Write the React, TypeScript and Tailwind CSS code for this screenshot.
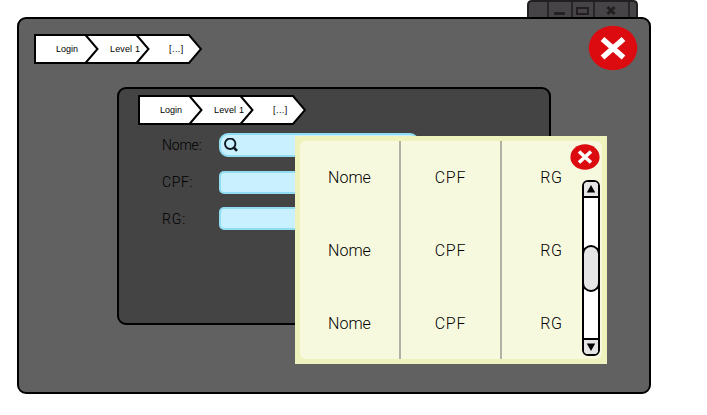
const crumbFont = "font-['Liberation_Sans',Arial,sans-serif]";

function Breadcrumb() {
  return (
    <nav className={`relative h-[30px] w-[168px] text-[9px] leading-[30px] text-black ${crumbFont}`}>
      <svg className="absolute inset-0" width="168" height="30" viewBox="0 0 168 30" fill="none" stroke="#000" strokeWidth="2">
        <path d="M1 1H155L167 15L155 29H1Z" fill="#fff" />
        <path d="M51.5 1L63.5 15L51.5 29M102.5 1L114.5 15L102.5 29" />
      </svg>
      <div className="relative flex whitespace-nowrap">
        <span className="w-[54px] pl-[22px]">Login</span>
        <span className="w-[59px] pl-[22px] tracking-[0.15px]">Level 1</span>
        <span className="pl-[22px] tracking-[0.45px]">[...]</span>
      </div>
    </nav>
  );
}

function WindowControls() {
  return (
    <svg className="block" width="111" height="17" viewBox="0 0 111 17" fill="none" stroke="#231f20" strokeWidth="2">
      <path d="M1 18V5Q1 1 5 1H106Q110 1 110 5V18" fill="#464446" />
      <path d="M21 1V17M45 1V17M67 1V17M102 1V17" strokeWidth="1.6" />
      <path d="M27 13.5H38" strokeWidth="2.8" />
      <rect x="50" y="8" width="11" height="6" />
      <path d="M80.5 7L87.5 14M87.5 7L80.5 14" strokeWidth="3" />
    </svg>
  );
}

function CloseButton({ small = false }: { small?: boolean }) {
  return small ? (
    <button aria-label="Close" className="block">
      <svg className="block" width="30" height="26" viewBox="0 0 30 26">
        <ellipse cx="15" cy="13" rx="14.6" ry="12.8" fill="#db0b10" />
        <path d="M9 7.5L21 18.5M21 7.5L9 18.5" stroke="#fff" strokeWidth="3.6" />
      </svg>
    </button>
  ) : (
    <button aria-label="Close" className="block">
      <svg className="block" width="50" height="46" viewBox="0 0 50 46">
        <ellipse cx="25" cy="23" rx="24.3" ry="22.3" fill="#db0b10" />
        <path d="M14.5 14L35.5 32.5M35.5 14L14.5 32.5" stroke="#fff" strokeWidth="5.6" />
      </svg>
    </button>
  );
}

function Form() {
  return (
    <div className="mt-2 flex flex-col pl-[43px] font-[Roboto,'Liberation_Sans',sans-serif] text-[14px] font-light text-black">
      <div className="flex h-6 items-center">
        <span className="w-[57px] tracking-[-0.2px]">Nome:</span>
        <div className="h-6 w-[200px] rounded-[9px] border-2 border-[#90dcf0] bg-[#c8f0fe] pt-[3px] pl-[2px]">
          <svg width="16" height="15" viewBox="0 0 16 15" fill="none" stroke="#101820">
            <circle cx="7.2" cy="5.8" r="5.2" strokeWidth="1.9" />
            <path d="M10.4 9.2L14 12.8" strokeWidth="2.6" />
          </svg>
        </div>
      </div>
      <div className="mt-[14px] flex h-[23px] items-center">
        <span className="w-[57px] tracking-[0.6px]">CPF:</span>
        <div className="h-[23px] w-[200px] rounded-[5px] border-2 border-[#90dcf0] bg-[#c8f0fe]" />
      </div>
      <div className="mt-[13px] flex h-[23px] items-center">
        <span className="w-[57px] pt-px tracking-[0.9px]">RG:</span>
        <div className="h-[23px] w-[200px] rounded-[5px] border-2 border-[#90dcf0] bg-[#c8f0fe]" />
      </div>
    </div>
  );
}

function Column({ label, className }: { label: string; className: string }) {
  return (
    <div className={`flex shrink-0 flex-col border-[#b2b2a4] text-center ${className}`}>
      {[0, 1, 2].map((row) => (
        <span key={row} className="h-[73px] leading-[73px]">{label}</span>
      ))}
    </div>
  );
}

function Scrollbar() {
  return (
    <div className="flex h-[176px] w-[18px] flex-col overflow-hidden rounded-[6px] border-2 border-black bg-white">
      <div className="flex h-4 items-center justify-center border-b-2 border-black bg-[#e5e5e5]">
        <svg width="10" height="8" viewBox="0 0 10 8"><path d="M5 0L9.2 7.5H.8Z" /></svg>
      </div>
      <div className="flex-1 pt-[47px]">
        <div className="-mx-[2px] h-[47px] rounded-[9px] border-2 border-black bg-[#e5e5e5]" />
      </div>
      <div className="flex h-4 items-center justify-center border-t-2 border-black bg-[#e5e5e5]">
        <svg width="10" height="8" viewBox="0 0 10 8"><path d="M5 8L9.2 .5H.8Z" /></svg>
      </div>
    </div>
  );
}

function ResultsPopup() {
  return (
    <section className="absolute top-[136px] left-[295px] h-[228px] w-[312px] bg-[#eef3bd] p-[5px]">
      <div className="flex h-full rounded-[6px] bg-[#f7f9df] font-[Roboto,'Liberation_Sans',sans-serif] text-[16px] font-light text-black">
        <Column label="Nome" className="w-[101px] border-r-2" />
        <Column label="CPF" className="w-[101px] border-r-2 tracking-[0.8px]" />
        <Column label="RG" className="w-[100px] pr-px tracking-[0.6px]" />
      </div>
      <div className="absolute top-[8px] right-[7px] flex flex-col items-end">
        <CloseButton small />
        <div className="mt-[10px]"><Scrollbar /></div>
      </div>
    </section>
  );
}

export default function App() {
  return (
    <div className="relative h-[415px] w-[707px] overflow-hidden bg-white font-['Liberation_Sans',Arial,sans-serif]">
      <div className="ml-[17px] w-[634px]">
        <div className="flex justify-end pr-[13px]">
          <WindowControls />
        </div>
        <main className="h-[377px] rounded-[9px] border-2 border-black bg-[#616161]">
          <div className="flex h-[68px] items-start justify-between pt-[6px] pr-[11px] pl-[15px]">
            <div className="pt-[9px]"><Breadcrumb /></div>
            <CloseButton />
          </div>
          <section className="ml-[98px] h-[238px] w-[434px] rounded-[9px] border-2 border-black bg-[#444] pt-[6px]">
            <div className="pl-[19px]"><Breadcrumb /></div>
            <Form />
          </section>
        </main>
      </div>
      <ResultsPopup />
    </div>
  );
}
